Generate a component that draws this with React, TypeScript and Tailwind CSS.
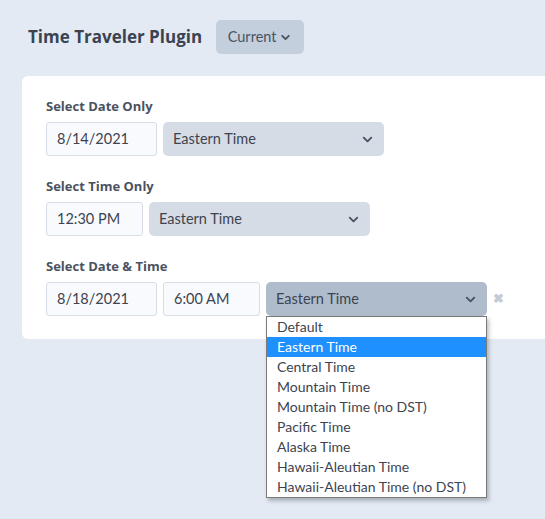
import { ChevronDown } from 'lucide-react';

const zones = [
  'Default',
  'Eastern Time',
  'Central Time',
  'Mountain Time',
  'Mountain Time (no DST)',
  'Pacific Time',
  'Alaska Time',
  'Hawaii-Aleutian Time',
  'Hawaii-Aleutian Time (no DST)',
];

const bodyFont = { fontFamily: 'Lato, "Open Sans", sans-serif' };

function TextBox({ value, w }: { value: string; w: string }) {
  return (
    <div
      style={bodyFont}
      className={`${w} h-[34px] flex items-center pl-[10px] bg-[#f8fafd] border border-[#d7dee8] rounded-[3px] text-[14.5px] text-[#3d4450]`}
    >
      {value}
    </div>
  );
}

function ZoneSelect({ open = false }: { open?: boolean }) {
  return (
    <div
      style={bodyFont}
      className={`w-[221px] h-[34px] flex items-center justify-between pl-[10px] pr-[9px] rounded-[5px] text-[14.5px] text-[#3d4450] ${
        open ? 'bg-[#afbccc]' : 'bg-[#d6dce6]'
      }`}
    >
      <span>Eastern Time</span>
      <ChevronDown size={15} strokeWidth={3} className="text-[#4a5361]" />
    </div>
  );
}

function Label({ children }: { children: string }) {
  return (
    <div className="text-[13px] leading-[16px] font-bold text-[#4a5261] mb-[8px]">{children}</div>
  );
}

export default function App() {
  return (
    <div
      className="w-[545px] h-[519px] overflow-hidden bg-[#e3eaf4] text-[#3d4450]"
      style={{ fontFamily: '"Open Sans", "Noto Sans", sans-serif' }}
    >
      <div className="flex items-center pl-[28px] pt-[20px] h-[54px]">
        <h1 className="text-[17px] font-bold text-[#3b4350]">Time Traveler Plugin</h1>
        <button
          style={bodyFont}
          className="ml-[14px] h-[34px] w-[88px] flex items-center justify-center gap-[3px] bg-[#c4cfdd] rounded-[5px] text-[14.5px] text-[#4a5361]"
        >
          Current
          <ChevronDown size={13} strokeWidth={3.5} />
        </button>
      </div>

      <div className="ml-[22px] mt-[22px] w-[540px] bg-white rounded-l-[6px] pl-[24px] pt-[22px] pb-[23px]">
        <Label>Select Date Only</Label>
        <div className="flex gap-[6px]">
          <TextBox value="8/14/2021" w="w-[111px]" />
          <ZoneSelect />
        </div>

        <div className="mt-[22px]">
          <Label>Select Time Only</Label>
          <div className="flex gap-[6px]">
            <TextBox value="12:30 PM" w="w-[97px]" />
            <ZoneSelect />
          </div>
        </div>

        <div className="mt-[22px]">
          <Label>Select Date &amp; Time</Label>
          <div className="flex items-center gap-[6px]">
            <TextBox value="8/18/2021" w="w-[111px]" />
            <TextBox value="6:00 AM" w="w-[97px]" />
            <div className="relative">
              <ZoneSelect open />
              <ul
                style={bodyFont}
                className="absolute left-0 top-[34px] w-[221px] bg-white border border-[#7a7a7a] shadow-[2px_3px_4px_rgba(0,0,0,0.25)] text-[14px] text-[#3d4450] z-10"
              >
                {zones.map((z, i) => (
                  <li
                    key={z}
                    className={`h-[20px] leading-[20px] pl-[10px] ${
                      i === 1 ? 'bg-[#1e90ff] text-white' : ''
                    }`}
                  >
                    {z}
                  </li>
                ))}
              </ul>
            </div>
            <span className="text-[13px] font-bold text-[#c5cbd3]">✖</span>
          </div>
        </div>
      </div>
    </div>
  );
}
